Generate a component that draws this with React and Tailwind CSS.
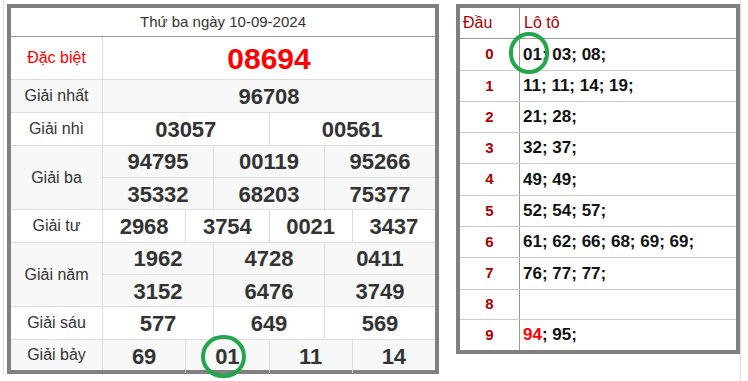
import React from 'react'

const prizes = [
  { label: 'Giải nhất', rows: [['96708']], bg: 'bg-[#f8f8f8]' },
  { label: 'Giải nhì', rows: [['03057', '00561']], bg: 'bg-white' },
  { label: 'Giải ba', rows: [['94795', '00119', '95266'], ['35332', '68203', '75377']], bg: 'bg-[#f8f8f8]' },
  { label: 'Giải tư', rows: [['2968', '3754', '0021', '3437']], bg: 'bg-white' },
  { label: 'Giải năm', rows: [['1962', '4728', '0411'], ['3152', '6476', '3749']], bg: 'bg-[#f8f8f8]' },
  { label: 'Giải sáu', rows: [['577', '649', '569']], bg: 'bg-white' },
  { label: 'Giải bảy', rows: [['69', '01', '11', '14']], bg: 'bg-[#f8f8f8]', last: true },
]

const loto = [
  { dau: '0', items: ['01', '03', '08'], h: 'h-[32px]' },
  { dau: '1', items: ['11', '11', '14', '19'], h: 'h-[31px]' },
  { dau: '2', items: ['21', '28'], h: 'h-[31px]' },
  { dau: '3', items: ['32', '37'], h: 'h-[31px]' },
  { dau: '4', items: ['49', '49'], h: 'h-[32px]' },
  { dau: '5', items: ['52', '54', '57'], h: 'h-[31px]' },
  { dau: '6', items: ['61', '62', '66', '68', '69', '69'], h: 'h-[31px]' },
  { dau: '7', items: ['76', '77', '77'], h: 'h-[32px]' },
  { dau: '8', items: [], h: 'h-[30px]' },
  { dau: '9', items: ['94', '95'], h: 'h-[30px]', last: true },
]

function NumberRow({ values, className }) {
  return (
    <div className={`flex ${className}`}>
      {values.map((v, i) => (
        <div
          key={i}
          className={`flex flex-1 items-center justify-center text-[22px] font-bold text-[#333] ${
            i < values.length - 1 ? 'border-r border-[#ddd]' : ''
          }`}
        >
          {v}
        </div>
      ))}
    </div>
  )
}

function PrizeRow({ prize }) {
  const double = prize.rows.length === 2
  const height = prize.last ? 'h-[30px]' : double ? 'h-[64px]' : 'h-[33px]'
  return (
    <div className={`flex ${height} ${prize.bg} ${prize.last ? '' : 'border-b border-[#ddd]'}`}>
      <div className="flex w-[92px] items-center justify-center border-r border-[#ddd] text-[16px] text-[#333]">
        {prize.label}
      </div>
      <div className="flex flex-1 flex-col">
        {double ? (
          <>
            <NumberRow values={prize.rows[0]} className="h-[32px] border-b border-[#ddd]" />
            <NumberRow values={prize.rows[1]} className="flex-1" />
          </>
        ) : (
          <NumberRow values={prize.rows[0]} className="flex-1" />
        )}
      </div>
    </div>
  )
}

export default function App() {
  return (
    <div className="relative flex h-[381px] w-[748px] bg-white font-['Liberation_Sans',Arial,sans-serif]">
      <div className="ml-[3px] h-[375px] border-l border-[#ddd] pl-[3px] pt-[4px]">
        <div className="w-[432px] border-4 border-[#808080] bg-white">
          <div className="flex h-[29px] items-center justify-center border-b border-[#999] text-[15px] text-[#333]">
            Thứ ba ngày 10-09-2024
          </div>
          <div className="flex h-[43px] border-b border-[#ddd] bg-white">
            <div className="flex w-[92px] items-center justify-center border-r border-[#ddd] text-[16px] text-[#f00]">
              Đặc biệt
            </div>
            <div className="flex flex-1 items-center justify-center text-[30px] font-bold text-[#f00]">08694</div>
          </div>
          {prizes.map((p) => (
            <PrizeRow key={p.label} prize={p} />
          ))}
        </div>
      </div>

      <div className="ml-[17px] h-full border-r border-[#ddd] pt-[4px]">
        <div className="w-[284px] border-4 border-[#808080] bg-white">
          <div className="flex h-[31px] border-b border-[#999] text-[16px] text-[#a00]">
            <div className="flex w-[60px] items-center border-r border-[#999] pl-[3px]">Đầu</div>
            <div className="flex items-center pl-[4px]">Lô tô</div>
          </div>
          {loto.map((r) => (
            <div key={r.dau} className={`flex ${r.h} ${r.last ? '' : 'border-b border-[#ccc]'}`}>
              <div className="flex w-[60px] items-center justify-center border-r border-[#999] text-[15px] font-bold text-[#a00]">
                {r.dau}
              </div>
              <div className="flex items-center pl-[3px] text-[17px] font-bold text-[#111]">
                {r.items.map((it, i) => (
                  <span key={i} className="whitespace-pre">
                    <span className={it === '94' ? 'text-[#f00]' : ''}>{it}</span>
                    {i < r.items.length - 1 ? '; ' : ';'}
                  </span>
                ))}
              </div>
            </div>
          ))}
        </div>
      </div>

      <div className="absolute left-[201px] top-[335px] h-[43px] w-[45px] rounded-full border-4 border-[#22a84a]" />
      <div className="absolute left-[509px] top-[32px] h-[42px] w-[40px] rounded-full border-4 border-[#22a84a]" />
    </div>
  )
}
